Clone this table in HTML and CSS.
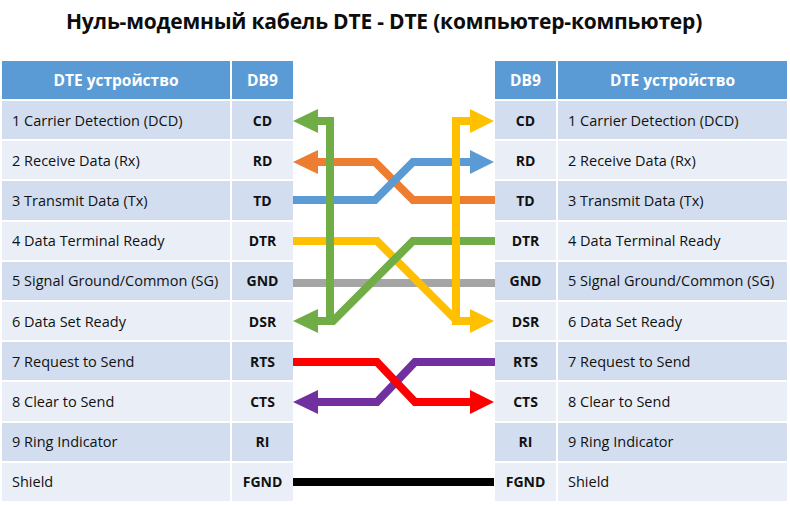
FILE: index.html
```html
<!DOCTYPE html>
<html lang="ru">
<head>
<meta charset="utf-8">
<title>Нуль-модемный кабель DTE - DTE</title>
<link rel="stylesheet" href="styles.css">
</head>
<body>
<h1 class="title">Нуль-модемный кабель DTE - DTE (компьютер-компьютер)</h1>
<div class="diagram">
  <div class="table table-left">
    <div class="cell head">DTE устройство</div><div class="cell head">DB9</div>
    <div class="cell name dark">1 Carrier Detection (DCD)</div><div class="cell pin dark">CD</div>
    <div class="cell name light">2 Receive Data (Rx)</div><div class="cell pin light">RD</div>
    <div class="cell name dark">3 Transmit Data (Tx)</div><div class="cell pin dark">TD</div>
    <div class="cell name light">4 Data Terminal Ready</div><div class="cell pin light">DTR</div>
    <div class="cell name dark">5 Signal Ground/Common (SG)</div><div class="cell pin dark">GND</div>
    <div class="cell name light">6 Data Set Ready</div><div class="cell pin light">DSR</div>
    <div class="cell name dark">7 Request to Send</div><div class="cell pin dark">RTS</div>
    <div class="cell name light">8 Clear to Send</div><div class="cell pin light">CTS</div>
    <div class="cell name dark">9 Ring Indicator</div><div class="cell pin dark">RI</div>
    <div class="cell name light">Shield</div><div class="cell pin light">FGND</div>
  </div>
  <svg class="wires" viewBox="293 61 202 442" width="202" height="442" aria-hidden="true">
    <g fill="none" stroke-width="8" stroke-linejoin="miter" stroke-linecap="butt">
      <path d="M293 283 H495" stroke="#a5a5a5"/>
      <path d="M495 200 H413 L375 162 H318" stroke="#ed7d31"/>
      <path d="M293 200 H375 L413 162 H470" stroke="#5b9bd5"/>
      <path d="M293 241 H377 L457 321 H470" stroke="#ffc000"/>
      <path d="M495 241 H413 L333 321 H318" stroke="#70ad47"/>
      <path d="M330 325 V121 H318" stroke="#70ad47"/>
      <path d="M456 325 V121 H470" stroke="#ffc000"/>
      <path d="M495 362 H415 L377 402 H318" stroke="#7030a0"/>
      <path d="M293 362 H377 L415 402 H470" stroke="#ff0000"/>
      <path d="M293 482 H494" stroke="#000000"/>
    </g>
    <g>
      <polygon points="293,162 318,150 318,174" fill="#ed7d31"/>
      <polygon points="494,162 470,150 470,174" fill="#5b9bd5"/>
      <polygon points="293,121 318,109 318,133" fill="#70ad47"/>
      <polygon points="293,321 318,309 318,333" fill="#70ad47"/>
      <polygon points="494,121 470,109 470,133" fill="#ffc000"/>
      <polygon points="494,321 470,309 470,333" fill="#ffc000"/>
      <polygon points="494,402 470,390 470,414" fill="#ff0000"/>
      <polygon points="293,402 318,390 318,414" fill="#7030a0"/>
    </g>
  </svg>
  <div class="table table-right">
    <div class="cell head">DB9</div><div class="cell head">DTE устройство</div>
    <div class="cell pin dark">CD</div><div class="cell name dark">1 Carrier Detection (DCD)</div>
    <div class="cell pin light">RD</div><div class="cell name light">2 Receive Data (Rx)</div>
    <div class="cell pin dark">TD</div><div class="cell name dark">3 Transmit Data (Tx)</div>
    <div class="cell pin light">DTR</div><div class="cell name light">4 Data Terminal Ready</div>
    <div class="cell pin dark">GND</div><div class="cell name dark">5 Signal Ground/Common (SG)</div>
    <div class="cell pin light">DSR</div><div class="cell name light">6 Data Set Ready</div>
    <div class="cell pin dark">RTS</div><div class="cell name dark">7 Request to Send</div>
    <div class="cell pin light">CTS</div><div class="cell name light">8 Clear to Send</div>
    <div class="cell pin dark">RI</div><div class="cell name dark">9 Ring Indicator</div>
    <div class="cell pin light">FGND</div><div class="cell name light">Shield</div>
  </div>
</div>
</body>
</html>
```
FILE: styles.css
```css
* { box-sizing: border-box; }
html, body { margin: 0; padding: 0; background: #ffffff; }
body {
  width: 790px;
  height: 505px;
  overflow: hidden;
  font-family: "Open Sans", "Liberation Sans", sans-serif;
  color: #111111;
}
.title {
  margin: 0;
  height: 61px;
  padding-top: 7px;
  padding-right: 22px;
  font-size: 21px;
  font-weight: 700;
  text-align: center;
  color: #0d0d0d;
  letter-spacing: -0.2px;
}
.diagram {
  display: flex;
  padding-left: 2px;
}
.table {
  display: grid;
  grid-template-rows: 38px repeat(10, 38.2px);
  column-gap: 2px;
  row-gap: 2px;
  background: #ffffff;
}
.table-left { grid-template-columns: 228px 61px; width: 291px; }
.table-right { grid-template-columns: 61px 229px; width: 292px; }
.wires { display: block; flex: none; }
.cell {
  display: flex;
  align-items: center;
  font-size: 14.5px;
  white-space: nowrap;
}
.head {
  background: #5b9bd5;
  color: #ffffff;
  font-weight: 700;
  font-size: 15.5px;
  justify-content: center;
}
.dark { background: #d2deef; }
.light { background: #eaeff7; }
.name { padding-left: 10px; }
.pin { justify-content: center; font-weight: 700; font-size: 14px; }
```
